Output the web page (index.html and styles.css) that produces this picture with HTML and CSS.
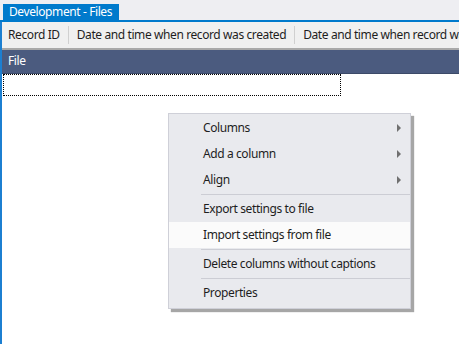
FILE: index.html
```html
<!DOCTYPE html>
<html lang="en">
<head>
  <meta charset="UTF-8" />
  <title>Development - Files</title>
  <link rel="stylesheet" href="styles.css">
</head>
<body>
  <div class="tabs">
    <div class="tab">Development - Files</div>
  </div>
  <div class="panel">
    <div class="col-headers">
      <div class="col">Record ID</div>
      <div class="col">Date and time when record was created</div>
      <div class="col">Date and time when record was modified</div>
    </div>
    <div class="group-bar">File</div>
    <div class="rows">
      <div class="row focused"></div>
    </div>

    <div class="menu">
      <div class="item">Columns <span class="arrow"></span></div>
      <div class="item">Add a column <span class="arrow"></span></div>
      <div class="item">Align <span class="arrow"></span></div>
      <div class="sep"></div>
      <div class="item">Export settings to file</div>
      <div class="item hover">Import settings from file</div>
      <div class="sep"></div>
      <div class="item">Delete columns without captions</div>
      <div class="sep"></div>
      <div class="item">Properties</div>
    </div>
  </div>
</body>
</html>
```

FILE: styles.css
```css
body {
  margin: 0;
  width: 459px;
  height: 344px;
  overflow: hidden;
  font-family: 'Noto Sans', 'Open Sans', sans-serif;
  font-size: 12px;
  letter-spacing: -0.4px;
  color: #1e1e1e;
  background: #eeeef2;
}
.tabs {
  height: 22px;
  padding: 4px 0 0 3px;
  box-sizing: border-box;
  border-bottom: 2px solid #007acc;
  display: flex;
}
.tab {
  background: #007acc;
  color: #fff;
  padding: 0 7px 0 6px;
  line-height: 16px;
}
.panel {
  position: relative;
  height: 322px;
  border-left: 2px solid #1c7fd1;
  background: #fff;
}
.col-headers {
  display: flex;
  height: 26px;
  background: #f0f0f0;
  border-bottom: 2px solid #a9a9a9;
  overflow: hidden;
  white-space: nowrap;
}
.col {
  padding: 0 8px;
  margin: 4px 0;
  line-height: 18px;
  border-right: 1px solid #d0d0d0;
}
.col:first-child {
  padding-left: 6px;
}
.group-bar {
  background: #4b5b7f;
  color: #fff;
  height: 23px;
  line-height: 22px;
  padding-left: 6px;
  border-bottom: 1px solid #3c4a68;
}
.rows {
  padding-left: 1px;
}
.row.focused {
  width: 336px;
  height: 20px;
  border: 1px dotted #000;
}
.menu {
  position: absolute;
  left: 166px;
  top: 91px;
  width: 241px;
  padding: 1px 0 2px;
  background: #e9eaee;
  border: 1px solid #cfd0d8;
  box-shadow: 3px 3px 1px rgba(0, 0, 0, 0.35);
}
.item {
  position: relative;
  height: 26px;
  line-height: 26px;
  padding-left: 34px;
}
.item.hover {
  background: #fbfbfb;
}
.arrow {
  position: absolute;
  right: 9px;
  top: 9px;
  width: 0;
  height: 0;
  border-left: 4px solid #707070;
  border-top: 4px solid transparent;
  border-bottom: 4px solid transparent;
}
.sep {
  height: 1px;
  margin: 1px 0 1px 32px;
  background: #cccdd4;
}
```
